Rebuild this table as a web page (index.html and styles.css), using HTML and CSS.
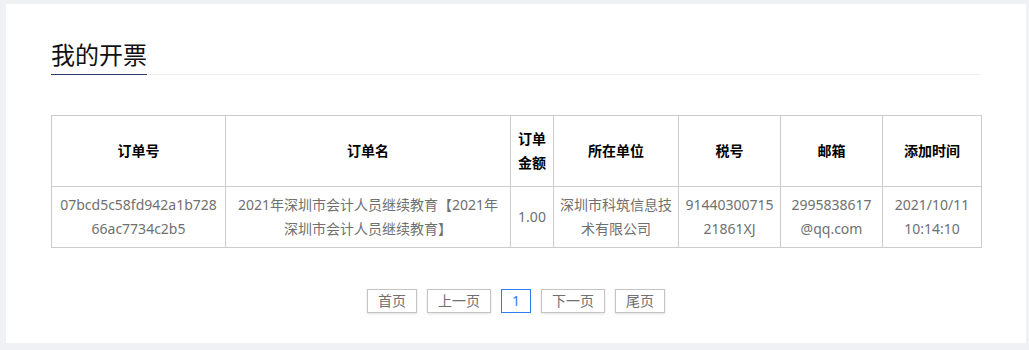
FILE: index.html
```html
<!DOCTYPE html>
<html lang="zh-CN">
<head>
<meta charset="utf-8">
<title>我的开票</title>
<link rel="stylesheet" href="styles.css">
</head>
<body>
<div class="panel">
  <h2 class="title"><span class="title-text">我的开票</span></h2>
  <table class="grid">
    <colgroup>
      <col class="c1"><col class="c2"><col class="c3"><col class="c4"><col class="c5"><col class="c6"><col class="c7">
    </colgroup>
    <thead>
      <tr>
        <th>订单号</th>
        <th>订单名</th>
        <th>订单金额</th>
        <th>所在单位</th>
        <th>税号</th>
        <th>邮箱</th>
        <th>添加时间</th>
      </tr>
    </thead>
    <tbody>
      <tr>
        <td class="brk">07bcd5c58fd942a1b72866ac7734c2b5</td>
        <td>2021年深圳市会计人员继续教育【2021年深圳市会计人员继续教育】</td>
        <td>1.00</td>
        <td>深圳市科筑信息技术有限公司</td>
        <td class="brk">9144030071521861XJ</td>
        <td class="brk">2995838617@qq.com</td>
        <td>2021/10/11 10:14:10</td>
      </tr>
    </tbody>
  </table>
  <div class="pager">
    <a class="pg">首页</a>
    <a class="pg">上一页</a>
    <a class="pg active">1</a>
    <a class="pg">下一页</a>
    <a class="pg">尾页</a>
  </div>
</div>
</body>
</html>
```

FILE: styles.css
```css
html, body {
  margin: 0;
  padding: 0;
}
body {
  background: #f0f1f4;
  font-family: "Noto Sans", "Noto Sans CJK SC", sans-serif;
  padding: 4px 3px 7px 6px;
  height: 350px;
  box-sizing: border-box;
}
.panel {
  background: #fff;
  height: 339px;
  box-sizing: border-box;
  padding: 34px 45px 0 45px;
}
.title {
  margin: 0;
  font-size: 24px;
  font-weight: normal;
  line-height: 34px;
  color: #111;
  border-bottom: 1px solid #eeeeee;
  display: flex;
}
.title-text {
  padding-bottom: 2px;
  border-bottom: 1px solid #2b3e6b;
  margin-bottom: -1px;
}
.grid {
  margin-top: 40px;
  width: 930px;
  border-collapse: collapse;
  table-layout: fixed;
  border: 1px solid #cccccc;
}
.c1 { width: 174px; }
.c2 { width: 285px; }
.c3 { width: 43px; }
.c4 { width: 125px; }
.c5 { width: 102px; }
.c6 { width: 102px; }
.c7 { width: 99px; }
.grid th, .grid td {
  border: 1px solid #cccccc;
  text-align: center;
  vertical-align: middle;
  font-size: 14px;
  line-height: 24px;
  padding: 0 6px;
}
.grid th {
  height: 70px;
  font-weight: bold;
  color: #000;
}
.grid td {
  height: 60px;
  color: #707070;
}
.grid td.brk {
  word-break: break-all;
}
.pager {
  margin-top: 41px;
  display: flex;
  justify-content: center;
  gap: 10px;
}
.pg {
  height: 24px;
  box-sizing: border-box;
  border: 1px solid #c4c4c4;
  box-shadow: 0 1px 2px rgba(0, 0, 0, 0.12);
  padding: 0 10px;
  font-size: 14px;
  line-height: 22px;
  color: #707070;
  background: #fff;
}
.pg.active {
  border-color: #2f7cf0;
  color: #2f7cf0;
  box-shadow: none;
}
```
